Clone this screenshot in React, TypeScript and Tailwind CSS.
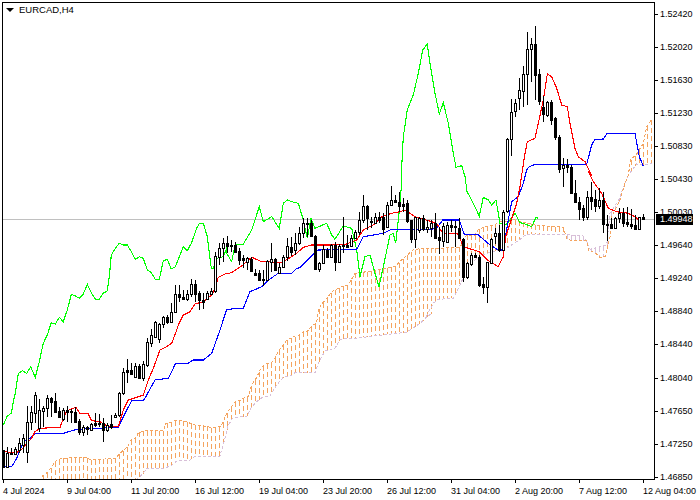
type Pt = [number, number];
// hi, body top, body bottom, lo, 1 = up bar (hollow)
type Bar = [number, number, number, number, number];

const place = (x0: number, y0: number, rows: Pt[]): Pt[] =>
  rows.map(([x, y]) => [x0 + x / 3, y0 + y / 3]);

const placeBars = (y0: number, rows: Bar[]): Bar[] =>
  rows.map(([h, t, b, l, up]) => [y0 + h / 3, y0 + t / 3, y0 + b / 3, y0 + l / 3, up]);

const bars: Bar[] = [
  ...placeBars(330, [
    [360, 360, 410, 410, 0], [350, 368, 410, 412, 1], [355, 368, 371, 375, 0], [352, 358, 372, 372, 1],
    [325, 340, 360, 368, 1], [312, 325, 345, 370, 1], [228, 275, 365, 400, 1], [228, 247, 276, 300, 1],
    [185, 196, 248, 280, 1], [208, 240, 295, 305, 1], [228, 235, 242, 290, 1], [195, 205, 235, 262, 1],
    [200, 204, 215, 262, 0], [188, 213, 246, 250, 0], [232, 243, 262, 265, 0], [235, 240, 268, 272, 1],
    [228, 240, 246, 275, 0], [238, 243, 246, 280, 0], [232, 245, 275, 280, 0], [268, 272, 305, 315, 0],
    [285, 290, 305, 318, 1], [288, 292, 298, 315, 0], [280, 283, 300, 302, 1], [250, 280, 284, 290, 0],
    [253, 280, 283, 290, 0], [265, 280, 300, 335, 0], [280, 285, 300, 305, 1], [255, 282, 292, 298, 0],
    [250, 255, 260, 262, 1], [185, 188, 255, 260, 1], [115, 125, 190, 195, 1], [88, 120, 125, 160, 0],
    [100, 120, 133, 135, 0], [100, 108, 140, 143, 1], [102, 108, 143, 148, 0], [92, 103, 145, 152, 1],
    [25, 37, 105, 110, 1],
  ]),
  ...placeBars(200, [
    [388, 405, 428, 442, 1], [362, 367, 410, 410, 1], [370, 373, 418, 430, 1], [348, 352, 373, 385, 1],
    [345, 352, 365, 372, 0], [310, 335, 365, 370, 1], [255, 283, 335, 340, 1], [255, 283, 290, 305, 0],
    [270, 290, 297, 300, 0], [270, 283, 298, 303, 1], [238, 252, 283, 290, 1], [240, 252, 282, 305, 0],
    [272, 280, 300, 330, 0], [278, 300, 305, 328, 0], [272, 280, 297, 298, 1], [265, 272, 283, 285, 1],
    [155, 168, 272, 278, 1], [130, 145, 170, 195, 1], [113, 130, 145, 185, 1], [108, 130, 137, 160, 0],
    [120, 136, 138, 155, 0],
  ]),
  ...placeBars(170, [
    [215, 226, 245, 248, 0], [233, 243, 270, 285, 0], [255, 263, 270, 295, 0], [262, 263, 277, 300, 1],
    [262, 267, 303, 307, 0], [296, 308, 315, 318, 0], [300, 310, 330, 333, 0], [300, 327, 330, 347, 0],
    [270, 273, 330, 333, 1], [218, 268, 275, 305, 1], [265, 268, 300, 303, 0], [280, 290, 310, 312, 1],
    [255, 260, 290, 292, 1], [205, 228, 260, 272, 1], [200, 230, 245, 258, 0], [190, 220, 240, 255, 1],
    [172, 190, 220, 225, 1], [145, 160, 190, 205, 1], [145, 160, 163, 200, 0], [150, 158, 198, 200, 0],
    [195, 198, 296, 297, 0], [275, 280, 298, 305, 1], [225, 238, 280, 283, 1], [235, 240, 262, 265, 0],
    [222, 225, 262, 265, 1], [215, 225, 275, 302, 0], [222, 228, 277, 280, 1], [140, 225, 228, 250, 0],
    [195, 225, 230, 235, 0], [195, 205, 228, 232, 1], [180, 185, 205, 208, 1], [125, 150, 185, 195, 1],
    [75, 108, 150, 160, 1], [105, 108, 145, 180, 0], [140, 153, 155, 175, 0], [128, 142, 158, 160, 1],
    [125, 140, 150, 160, 0], [130, 142, 178, 195, 0], [95, 105, 172, 175, 1], [48, 90, 105, 108, 1],
    [75, 90, 95, 100, 0], [65, 97, 107, 125, 0], [85, 103, 108, 125, 0], [90, 100, 152, 160, 0],
    [150, 150, 208, 220, 0], [140, 142, 206, 235, 1], [140, 143, 180, 190, 1], [135, 145, 178, 182, 0],
    [150, 172, 178, 190, 1], [150, 160, 175, 200, 1],
  ]),
  ...placeBars(170, [
    [128, 160, 203, 205, 0], [170, 202, 210, 253, 0], [158, 168, 212, 230, 1], [155, 165, 215, 217, 1],
    [150, 165, 170, 185, 0], [152, 167, 170, 230, 0], [145, 175, 205, 208, 0], [205, 208, 322, 335, 0],
    [275, 280, 322, 328, 1], [250, 256, 282, 288, 1], [250, 256, 262, 265, 0], [255, 260, 345, 350, 0],
    [320, 343, 352, 372, 0], [275, 276, 352, 398, 1], [205, 208, 278, 280, 1], [175, 190, 198, 222, 1],
    [165, 188, 240, 245, 0], [120, 125, 240, 243, 1],
  ]),
  ...placeBars(10, [
    [385, 388, 602, 608, 1], [268, 305, 388, 437, 1], [268, 278, 302, 322, 1], [205, 240, 265, 300, 1],
    [168, 192, 242, 290, 1], [65, 118, 192, 285, 1], [83, 102, 118, 215, 1], [48, 102, 195, 270, 0],
    [178, 193, 272, 285, 0], [258, 290, 313, 335, 0], [272, 277, 315, 322, 1], [270, 277, 330, 345, 0],
    [320, 325, 382, 390, 0], [375, 382, 478, 488, 0], [445, 465, 475, 530, 1], [447, 465, 472, 490, 0],
  ]),
  ...placeBars(170, [
    [-15, -9, 68, 72, 0], [30, 68, 95, 98, 0], [80, 95, 118, 150, 0], [105, 115, 142, 152, 0],
    [62, 82, 140, 150, 1], [35, 82, 92, 120, 0], [60, 88, 107, 125, 0], [55, 90, 107, 118, 1],
    [65, 90, 163, 190, 0], [135, 163, 165, 212, 0], [145, 163, 175, 177, 0], [140, 145, 173, 175, 1],
    [115, 130, 145, 160, 1], [115, 128, 158, 172, 0], [112, 157, 163, 172, 0], [118, 162, 168, 177, 0],
    [135, 165, 177, 178, 0], [140, 142, 178, 179, 1], [132, 142, 148, 150, 0],
  ]),
];

const green: Pt[] = [
  ...place(0, 330, [[10, 285], [22, 258], [34, 250], [42, 205], [46, 190], [55, 130], [68, 122], [80, 130], [92, 110], [106, 142], [118, 95]]),
  ...place(0, 200, [[130, 430], [142, 405], [154, 368], [166, 372], [178, 352], [190, 365], [202, 330], [214, 283], [226, 288], [238, 295], [250, 282], [262, 253], [274, 278], [286, 297], [298, 298], [310, 280], [322, 272], [328, 230], [334, 165], [346, 145], [358, 130], [370, 135], [382, 135], [394, 155], [406, 178], [418, 170], [430, 175], [442, 210], [454, 218], [466, 238], [478, 238], [490, 182], [502, 178], [514, 207], [526, 200], [550, 140], [562, 152], [574, 130], [590, 85], [598, 70], [610, 70], [622, 110], [634, 205], [640, 205], [650, 175], [670, 170], [682, 140]]),
  ...place(200, 170, [[80, 250], [95, 275], [105, 225], [130, 222], [155, 180], [178, 110], [190, 155], [215, 140], [238, 175], [250, 100], [262, 90], [275, 95], [295, 100], [310, 150], [322, 205], [333, 145], [345, 175], [380, 160], [395, 195], [405, 208], [430, 168], [455, 175], [470, 240], [480, 320], [495, 260], [510, 255], [525, 310], [537, 350], [550, 290], [570, 195], [580, 190], [587, 220], [597, 130], [605, 40]]),
  ...place(350, 30, [[155, 410], [160, 320], [172, 240], [190, 195], [205, 130], [218, 60], [232, 42], [240, 100], [255, 190], [268, 252], [280, 218], [295, 280], [308, 360], [318, 412], [335, 407], [345, 440], [352, 490]]),
  ...place(420, 170, [[145, 70], [178, 138], [190, 82], [205, 90], [215, 105], [228, 90], [240, 160], [258, 165], [285, 130], [300, 158], [310, 160], [335, 170], [348, 142], [355, 145]]),
];

const red: Pt[] = [
  ...place(0, 330, [[10, 365], [50, 368], [70, 355], [80, 340], [95, 325], [105, 305], [120, 295], [180, 292], [190, 265], [200, 243], [228, 232], [240, 250], [265, 252], [275, 272], [300, 275], [325, 290], [355, 290], [370, 240], [385, 210], [430, 195], [445, 150], [460, 115], [480, 60], [500, 50], [515, 40], [530, 0]]),
  ...place(0, 200, [[535, 375], [550, 345], [570, 335], [585, 312], [610, 305], [635, 285], [645, 265], [655, 232], [675, 222], [695, 218]]),
  ...place(200, 170, [[125, 288], [155, 262], [185, 275], [245, 277], [262, 268], [290, 250], [310, 232], [335, 225], [395, 225], [440, 222], [470, 210], [490, 180], [520, 165], [545, 140], [575, 130], [600, 125], [615, 120], [645, 140], [695, 155]]),
  ...place(420, 170, [[50, 160], [68, 190], [115, 192], [130, 230], [178, 245], [205, 272], [235, 290], [250, 260], [257, 200], [290, 100], [300, 50]]),
  ...place(480, 10, [[125, 495], [135, 430], [142, 395], [165, 385], [175, 340], [190, 270], [202, 192], [215, 200], [230, 235], [245, 285], [262, 290], [270, 340], [285, 415], [295, 440], [315, 455], [335, 498]]),
  ...place(420, 170, [[505, 5], [520, 35], [545, 70], [565, 115], [590, 125], [625, 130], [645, 140], [660, 155]]),
];

const blue: Pt[] = [
  ...place(0, 330, [[10, 410], [35, 410], [50, 385], [70, 335], [90, 325], [105, 310], [190, 310], [230, 298], [355, 292], [370, 260], [395, 212], [432, 210], [465, 150], [505, 145], [527, 100], [565, 100], [580, 90], [610, 90], [635, 70], [660, 0]]),
  ...place(200, 170, [[80, 418], [130, 415], [150, 365], [185, 350], [205, 330], [235, 310], [275, 310], [290, 295], [300, 293], [330, 262], [355, 240], [470, 238], [490, 200], [550, 190], [575, 178], [695, 178]]),
  ...place(420, 170, [[50, 175], [68, 150], [118, 150], [132, 192], [175, 195], [210, 225], [235, 240], [250, 240], [265, 150], [275, 95], [295, 80], [310, 40], [320, 0]]),
  ...place(480, 10, [[145, 472], [165, 463], [320, 463], [335, 405], [345, 388], [370, 387], [382, 370], [465, 370], [478, 440], [490, 468]]),
];

const spanA: Pt[] = [
  ...place(0, 330, [[125, 440], [145, 425], [165, 395], [185, 385], [260, 382], [270, 390], [345, 385], [365, 365], [385, 348]]),
  ...place(130, 380, [[0, 182], [20, 172], [25, 158], [45, 152], [100, 152], [108, 130], [125, 126], [140, 120], [160, 122], [195, 135], [200, 135], [235, 140], [245, 145], [270, 140], [278, 130], [290, 100], [300, 85], [318, 62], [330, 62], [338, 55], [355, 50], [365, 15]]),
  ...place(215, 290, [[125, 262], [135, 240], [150, 222], [170, 218], [180, 205], [190, 182], [205, 165], [215, 150], [235, 140], [245, 142], [265, 125], [280, 122], [290, 108], [305, 98], [310, 60], [320, 42], [340, 20], [350, 5]]),
  ...place(200, 170, [[420, 352], [445, 345], [465, 310], [500, 305], [530, 300], [585, 290], [610, 265], [640, 240], [665, 235], [695, 235]]),
  ...place(420, 170, [[60, 235], [120, 232], [130, 215], [140, 195], [165, 195], [175, 178], [195, 170], [225, 165], [235, 155], [265, 155], [280, 148], [300, 155], [345, 165], [430, 172], [440, 205], [450, 210], [500, 212], [505, 240], [525, 248], [540, 262], [555, 260], [570, 200], [575, 140], [590, 110], [600, 90], [615, 40], [625, 15]]),
  ...place(480, 10, [[452, 450], [470, 432], [490, 400], [500, 350], [515, 328]]),
];

const spanB: Pt[] = [
  [41, 510],
  ...place(130, 380, [[20, 298], [40, 280], [50, 265], [105, 265], [125, 255], [140, 243], [180, 240], [195, 228], [270, 228], [282, 185], [295, 135], [310, 112], [350, 110], [365, 80], [380, 65], [400, 50], [420, 48]]),
  ...place(215, 290, [[185, 285], [205, 262], [230, 255], [240, 248], [300, 248], [310, 220], [330, 182], [360, 175], [375, 148], [420, 145]]),
  ...place(200, 170, [[590, 490], [620, 487], [660, 460], [695, 430]]),
  ...place(420, 170, [[15, 445], [40, 400], [55, 388], [100, 385], [120, 345], [145, 290], [170, 265], [200, 250], [235, 240], [260, 235], [300, 208], [320, 192], [430, 192], [450, 195], [490, 198], [500, 215], [510, 238], [560, 225], [570, 130], [590, 100], [600, 80], [615, 40], [625, 15]]),
  ...place(480, 10, [[470, 462], [490, 465], [515, 460]]),
];

const valueAt = (line: Pt[], x: number) => {
  for (let i = 1; i < line.length; i++) {
    const [x1, y1] = line[i - 1];
    const [x2, y2] = line[i];
    if (x <= x2) return y1 + ((y2 - y1) * (x - x1)) / (x2 - x1 || 1);
  }
  return line[line.length - 1][1];
};

const toPoints = (line: Pt[]) => line.map(([x, y]) => `${x.toFixed(1)},${y.toFixed(1)}`).join(" ");

const prices = [
  "1.52420", "1.52020", "1.51630", "1.51230", "1.50830", "1.50430", "1.50030", "1.49640",
  "1.49240", "1.48840", "1.48440", "1.48040", "1.47650", "1.47250", "1.46850",
];

const dates = [
  "4 Jul 2024", "9 Jul 04:00", "11 Jul 20:00", "16 Jul 12:00", "19 Jul 04:00", "23 Jul 20:00",
  "26 Jul 12:00", "31 Jul 04:00", "2 Aug 20:00", "7 Aug 12:00", "12 Aug 04:00",
];

const hatchXs = Array.from({ length: 153 }, (_, i) => 43 + i * 4);

function Chart() {
  return (
    <svg width={651} height={476} viewBox="3 3 651 476" className="block" shapeRendering="crispEdges" fill="none">
      {hatchXs.map((x) => {
        const a = valueAt(spanA, x);
        const b = valueAt(spanB, x);
        return (
          <line
            key={x}
            x1={x + 0.5}
            x2={x + 0.5}
            y1={Math.min(a, b)}
            y2={Math.max(a, b)}
            stroke={a < b ? "#F4A460" : "#D8BFD8"}
            strokeDasharray="5 3"
          />
        );
      })}
      <line x1={3} x2={654} y1={219.5} y2={219.5} stroke="#C0C0C0" />
      <polyline points={toPoints(spanB)} stroke="#D8BFD8" strokeDasharray="3 2" />
      <polyline points={toPoints(spanA)} stroke="#F4A460" strokeDasharray="3 2" />
      <polyline points={toPoints(green)} stroke="#00FF00" strokeWidth={1.1} />
      <polyline points={toPoints(blue)} stroke="#0000FF" strokeWidth={1.1} />
      <polyline points={toPoints(red)} stroke="#FF0000" strokeWidth={1.1} />
      {bars.map(([hi, top, bottom, lo, up], i) => {
        const x = 3.5 + i * 4;
        const t = Math.round(top);
        const b = Math.round(bottom);
        return (
          <g key={i}>
            <line x1={x} x2={x} y1={Math.round(hi)} y2={Math.round(lo)} stroke="#000" />
            <rect x={x - 1} y={t + 0.5} width={2} height={Math.max(b - t, 0)} fill={up ? "#fff" : "#000"} stroke="#000" />
          </g>
        );
      })}
    </svg>
  );
}

export default function App() {
  return (
    <div className="relative w-[700px] h-[500px] overflow-hidden bg-white pt-[2px] pl-[2px] font-['Liberation_Sans',sans-serif] text-[9px] text-black">
      <div className="flex h-[478px]">
        <div className="relative w-[653px] h-[478px] border border-black">
          <Chart />
          <div className="absolute left-[3px] top-[1px] flex items-center gap-[5px] text-[9.5px] leading-[12px]">
            <span className="w-0 h-0 border-x-[4px] border-x-transparent border-t-[4px] border-t-black" />
            EURCAD,H4
          </div>
        </div>
        <div className="relative flex flex-col pt-[12px]">
          {prices.map((price) => (
            <div key={price} className="flex h-[33.05px] shrink-0 items-start">
              <span className="w-[3px] h-px bg-black" />
              <span className="ml-[2px] -mt-[6px] leading-[12px]">{price}</span>
            </div>
          ))}
          <div className="absolute left-[1px] top-[212px] w-[37px] h-[11px] bg-black text-white pl-[4px] leading-[11px]">
            1.49948
          </div>
        </div>
      </div>
      <div className="flex pl-[1px]">
        {dates.map((date) => (
          <div key={date} className="flex flex-col w-[64px] shrink-0 whitespace-nowrap">
            <span className="w-px h-[3px] bg-black" />
            <span className="leading-[12px] mt-[2px]">{date}</span>
          </div>
        ))}
      </div>
    </div>
  );
}
